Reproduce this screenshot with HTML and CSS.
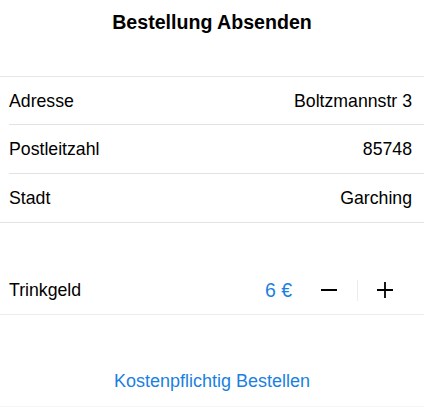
FILE: index.html
```html
<!DOCTYPE html>
<html lang="de">
<head>
<meta charset="utf-8">
<title>Bestellung Absenden</title>
<link rel="stylesheet" href="styles.css">
</head>
<body>
<div class="screen">
  <header class="nav">
    <h1 class="nav-title">Bestellung Absenden</h1>
  </header>

  <section class="group">
    <div class="row"><span class="label">Adresse</span><span class="value">Boltzmannstr 3</span></div>
    <div class="row"><span class="label">Postleitzahl</span><span class="value">85748</span></div>
    <div class="row"><span class="label">Stadt</span><span class="value">Garching</span></div>
  </section>

  <section class="group group-tip">
    <div class="row row-tip">
      <span class="label">Trinkgeld</span>
      <span class="tip-amount">6 €</span>
      <div class="stepper">
        <button class="step" type="button" aria-label="weniger">
          <svg width="16" height="16" viewBox="0 0 16 16"><path d="M0 8H16" stroke="#000" stroke-width="2"/></svg>
        </button>
        <span class="step-divider"></span>
        <button class="step" type="button" aria-label="mehr">
          <svg width="16" height="16" viewBox="0 0 16 16"><path d="M0 8H16M8 0V16" stroke="#000" stroke-width="1.8"/></svg>
        </button>
      </div>
    </div>
  </section>

  <section class="group group-action">
    <button class="action" type="button">Kostenpflichtig Bestellen</button>
  </section>
</div>
</body>
</html>
```

FILE: styles.css
```css
html, body {
  margin: 0;
  padding: 0;
  background: #fff;
}

.screen {
  font-family: "Liberation Sans", Arial, sans-serif;
  color: #000;
  width: 424px;
}

.nav {
  height: 44px;
  display: flex;
  align-items: center;
  justify-content: center;
  margin-bottom: 32px;
}

.nav-title {
  margin: 0;
  font-size: 19.6px;
  font-weight: bold;
  line-height: 1.15;
}

.group {
  border-top: 1px solid #e6e6e6;
  border-bottom: 1px solid #e2e2e2;
}

.row {
  box-sizing: border-box;
  height: 48.4px;
  margin-left: 9px;
  padding-right: 12px;
  padding-top: 1px;
  display: flex;
  align-items: center;
  border-bottom: 1px solid #e2e2e2;
  font-size: 17.7px;
}

.row:last-child {
  border-bottom: none;
}

.label {
  flex: 1;
}

.value {
  text-align: right;
}

.group-tip {
  margin-top: 43px;
  border-top: none;
  border-bottom-color: #ececec;
}

.row-tip {
  height: 48px;
  padding-top: 0;
  padding-right: 12px;
}

.tip-amount {
  color: #1b7fe0;
  font-size: 19.5px;
  margin-right: 10px;
}

.stepper {
  display: flex;
  align-items: center;
  width: 110px;
  height: 30px;
}

.step {
  flex: 1;
  height: 30px;
  padding: 0;
  border: none;
  background: none;
  display: flex;
  align-items: center;
  justify-content: center;
}

.step svg {
  display: block;
}

.step-divider {
  width: 1px;
  height: 21px;
  background: #ececec;
}

.group-action {
  margin-top: 43px;
  border-top: none;
  border-bottom-color: #f5f5f5;
}

.action {
  display: flex;
  align-items: center;
  justify-content: center;
  width: 100%;
  height: 48px;
  padding: 0 0 1px;
  border: none;
  background: none;
  font-family: inherit;
  font-size: 18px;
  color: #1b7fe0;
}
```
